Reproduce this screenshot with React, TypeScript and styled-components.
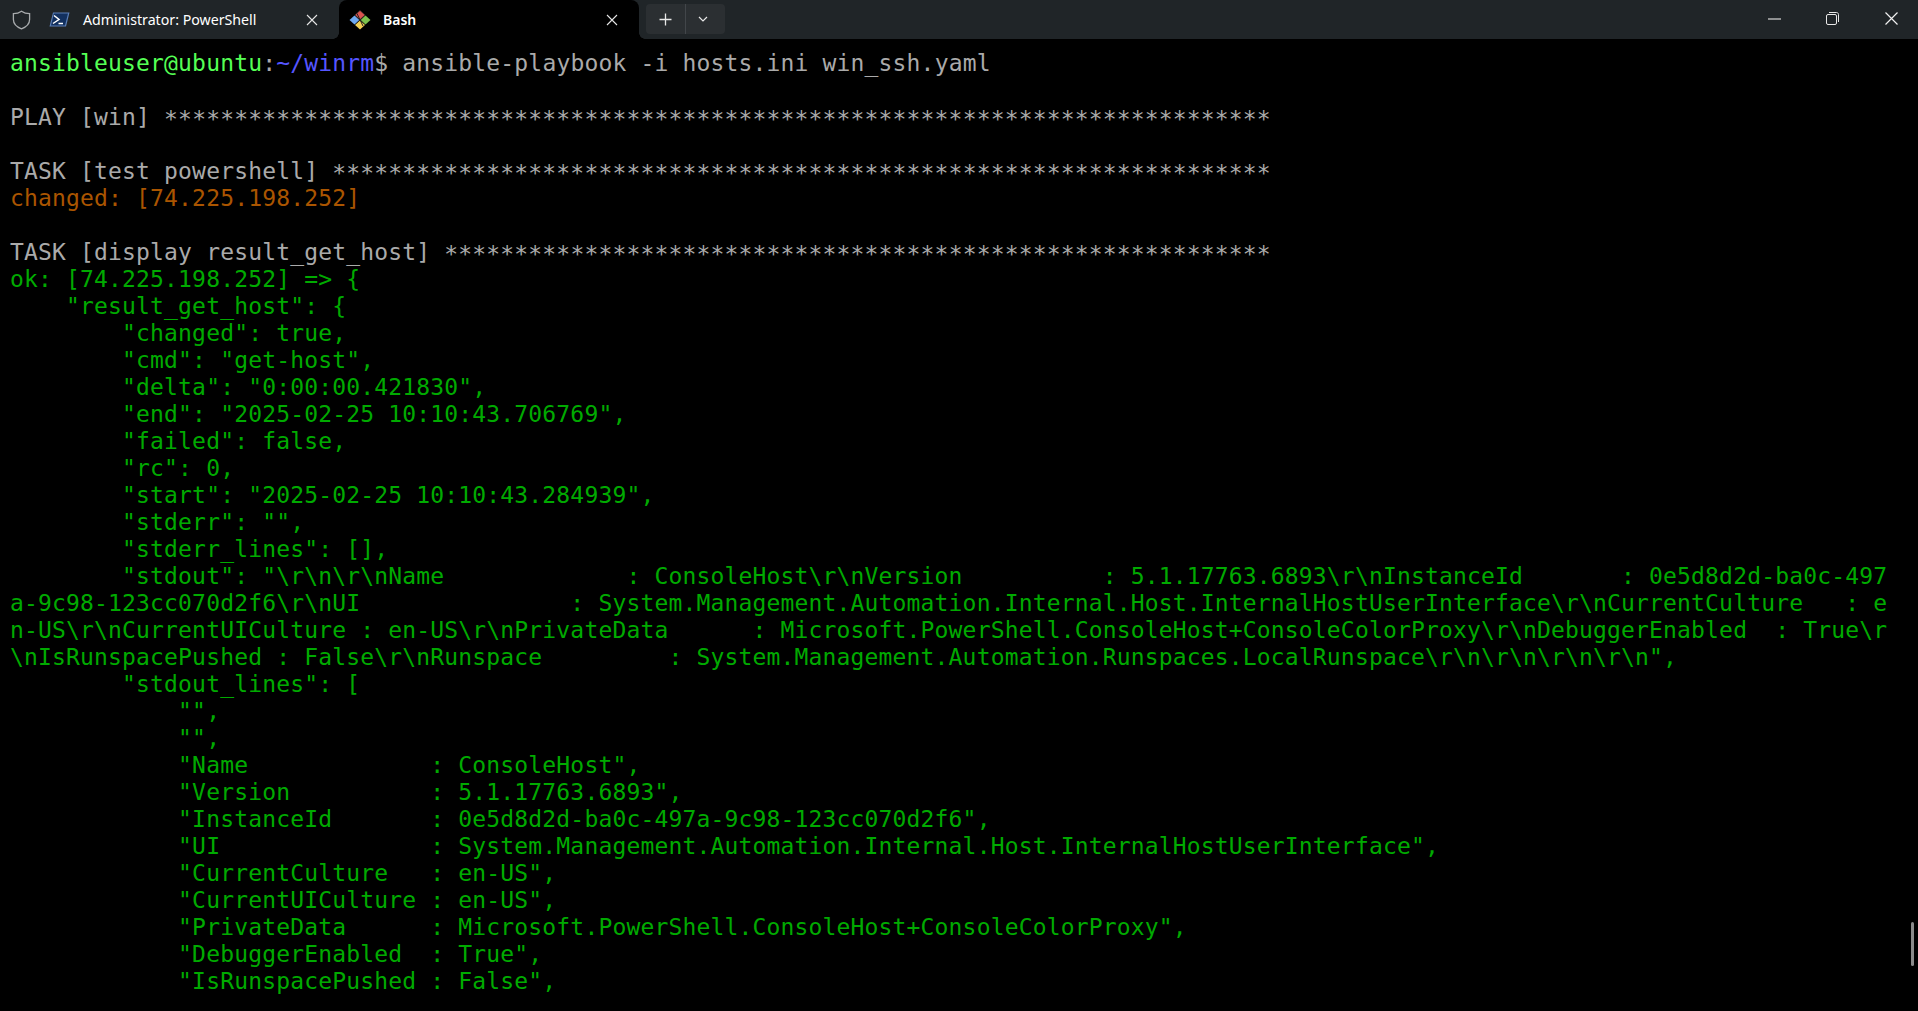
import React from "react";
import styled, { createGlobalStyle } from "styled-components";

const Global = createGlobalStyle`
  html, body { margin: 0; padding: 0; height: 100%; background: #000; overflow: hidden; }
  #root { height: 100%; }
`;

const Window = styled.div`
  position: relative;
  display: flex;
  flex-direction: column;
  height: 100vh;
  background: #000;
  overflow: hidden;
`;

const TitleBar = styled.header`
  display: flex;
  align-items: stretch;
  flex: 0 0 39px;
  background: #202528;
  font-family: "Noto Sans", "Open Sans", sans-serif;
  color: #fff;
`;

const ShieldSlot = styled.div`
  display: flex;
  align-items: center;
  justify-content: center;
  width: 42px;
`;

const Tab = styled.div<{ $width: number }>`
  display: flex;
  align-items: center;
  box-sizing: border-box;
  width: ${(p) => p.$width}px;
  padding: 0 12px 0 7px;
`;

const ActiveTab = styled(Tab)`
  position: relative;
  padding-left: 10px;
  background: #000;
  border-radius: 8px 8px 0 0;

  &::before,
  &::after {
    content: "";
    position: absolute;
    bottom: 0;
    width: 6px;
    height: 6px;
  }
  &::before {
    left: -6px;
    background: radial-gradient(circle at 0 0, transparent 5.5px, #000 6px);
  }
  &::after {
    right: -6px;
    background: radial-gradient(circle at 100% 0, transparent 5.5px, #000 6px);
  }
`;

const TabIcon = styled.span`
  display: flex;
  flex: 0 0 22px;
  margin-right: 12px;
`;

const TabLabel = styled.span<{ $active?: boolean }>`
  flex: 1;
  font-size: ${(p) => (p.$active ? 14 : 14.2)}px;
  font-weight: ${(p) => (p.$active ? 600 : 400)};
  white-space: nowrap;
`;

const CloseGlyph = styled.svg`
  flex: none;
  margin-right: 9px;
`;

const NewTabGroup = styled.div`
  display: flex;
  align-items: center;
  align-self: flex-start;
  height: 30px;
  margin: 4px 0 0 7px;
  background: #2b2f32;
  border-radius: 4px;
`;

const NewTabButton = styled.div<{ $w: number; $divider?: boolean; $endGap?: number }>`
  display: flex;
  align-items: center;
  justify-content: center;
  width: ${(p) => p.$w}px;
  height: 100%;
  box-sizing: border-box;
  padding-right: ${(p) => p.$endGap ?? 0}px;
  border-right: ${(p) => (p.$divider ? "1px solid #42464a" : "0")};
`;

const Spacer = styled.div`
  flex: 1;
`;

const WindowButton = styled.div<{ $w?: number; $startGap?: number }>`
  display: flex;
  align-items: center;
  justify-content: center;
  box-sizing: border-box;
  width: ${(p) => p.$w ?? 58}px;
  height: 37px;
  padding-left: ${(p) => p.$startGap ?? 0}px;
`;

const Terminal = styled.main`
  flex: 1;
  padding: 11px 0 0 10px;
  font-family: "DejaVu Sans Mono", monospace;
  font-size: 23px;
  letter-spacing: 0.162px;
  line-height: 27px;
  color: #aaaaaa;
  overflow: hidden;
`;

const Line = styled.div<{ $tone?: "green" | "orange" }>`
  height: 27px;
  white-space: pre;
  color: ${(p) => (p.$tone === "green" ? "#00aa00" : p.$tone === "orange" ? "#aa5500" : "#aaaaaa")};
`;

const PromptUser = styled.span`
  color: #55ff55;
`;

const PromptPath = styled.span`
  color: #5555ff;
`;

const Stars = styled.span`
  vertical-align: -2px;
`;

const ScrollThumb = styled.div`
  position: absolute;
  right: 4px;
  top: 922px;
  width: 3px;
  height: 44px;
  border-radius: 2px;
  background: #8a8a8a;
`;

const stars = (n: number) => "*".repeat(n);

const greenLines = [
  'ok: [74.225.198.252] => {',
  '    "result_get_host": {',
  '        "changed": true,',
  '        "cmd": "get-host",',
  '        "delta": "0:00:00.421830",',
  '        "end": "2025-02-25 10:10:43.706769",',
  '        "failed": false,',
  '        "rc": 0,',
  '        "start": "2025-02-25 10:10:43.284939",',
  '        "stderr": "",',
  '        "stderr_lines": [],',
  '        "stdout": "\\r\\n\\r\\nName             : ConsoleHost\\r\\nVersion          : 5.1.17763.6893\\r\\nInstanceId       : 0e5d8d2d-ba0c-497',
  'a-9c98-123cc070d2f6\\r\\nUI               : System.Management.Automation.Internal.Host.InternalHostUserInterface\\r\\nCurrentCulture   : e',
  'n-US\\r\\nCurrentUICulture : en-US\\r\\nPrivateData      : Microsoft.PowerShell.ConsoleHost+ConsoleColorProxy\\r\\nDebuggerEnabled  : True\\r',
  '\\nIsRunspacePushed : False\\r\\nRunspace         : System.Management.Automation.Runspaces.LocalRunspace\\r\\n\\r\\n\\r\\n\\r\\n",',
  '        "stdout_lines": [',
  '            "",',
  '            "",',
  '            "Name             : ConsoleHost",',
  '            "Version          : 5.1.17763.6893",',
  '            "InstanceId       : 0e5d8d2d-ba0c-497a-9c98-123cc070d2f6",',
  '            "UI               : System.Management.Automation.Internal.Host.InternalHostUserInterface",',
  '            "CurrentCulture   : en-US",',
  '            "CurrentUICulture : en-US",',
  '            "PrivateData      : Microsoft.PowerShell.ConsoleHost+ConsoleColorProxy",',
  '            "DebuggerEnabled  : True",',
  '            "IsRunspacePushed : False",',
];

const Close = ({ size = 12, color = "#e6e6e6" }: { size?: number; color?: string }) => (
  <CloseGlyph width={size} height={size} viewBox="0 0 12 12" fill="none" stroke={color} strokeWidth="1.1">
    <path d="M1 1 L11 11 M11 1 L1 11" />
  </CloseGlyph>
);

export default function App() {
  return (
    <Window>
      <Global />
      <TitleBar>
        <ShieldSlot>
          <svg width="19" height="20" viewBox="0 0 19 20" fill="none" stroke="#a8abad" strokeWidth="1.3">
            <path d="M9.5 1.2 C12 3 14.6 3.6 17.6 3.6 V9.5 C17.6 14 14.2 17 9.5 18.8 C4.8 17 1.4 14 1.4 9.5 V3.6 C4.4 3.6 7 3 9.5 1.2 Z" />
          </svg>
        </ShieldSlot>
        <Tab $width={297}>
          <TabIcon>
            <svg width="21" height="15" viewBox="0 0 21 15">
              <path d="M4 0.5 H20.5 L17 14.5 H0.5 Z" fill="#5b7fb8" />
              <path d="M4.8 1.5 H19 L16 13.5 H2 Z" fill="#12305f" />
              <path d="M5 3.5 L10 7.5 L4 11.5" fill="none" stroke="#fff" strokeWidth="1.5" />
              <path d="M9.5 11.5 H14" stroke="#fff" strokeWidth="1.5" />
            </svg>
          </TabIcon>
          <TabLabel>Administrator: PowerShell</TabLabel>
          <Close />
        </Tab>
        <ActiveTab $width={300}>
          <TabIcon>
            <svg width="22" height="20" viewBox="0 0 22 20">
              <path d="M11 0.5 L16 5 L11 9.5 L6 5 Z" fill="#d9534f" />
              <path d="M11 0.5 L16 5 L11 9.5 L6 5 Z" fill="none" stroke="#333" strokeWidth="0.6" />
              <path d="M5.5 5.5 L10.3 10 L5.5 14.5 L0.5 10 Z" fill="#6ea8f0" />
              <path d="M16.5 5.5 L21.5 10 L16.5 14.5 L11.7 10 Z" fill="#7cc24e" />
              <path d="M11 10.5 L16 15 L11 19.5 L6 15 Z" fill="#f2cf55" />
              <path d="M8 3.5 L14 16" stroke="#222" strokeWidth="1" />
            </svg>
          </TabIcon>
          <TabLabel $active>Bash</TabLabel>
          <Close />
        </ActiveTab>
        <NewTabGroup>
          <NewTabButton $w={40} $divider>
            <svg width="13" height="13" viewBox="0 0 13 13" stroke="#e8e8e8" strokeWidth="1.3">
              <path d="M6.5 0.5 V12.5 M0.5 6.5 H12.5" />
            </svg>
          </NewTabButton>
          <NewTabButton $w={39} $endGap={6}>
            <svg width="10" height="6" viewBox="0 0 10 6" fill="none" stroke="#e8e8e8" strokeWidth="1.2">
              <path d="M1 1 L5 5 L9 1" />
            </svg>
          </NewTabButton>
        </NewTabGroup>
        <Spacer />
        <WindowButton>
          <svg width="13" height="2" viewBox="0 0 13 2"><rect width="13" height="1.2" y="0.4" fill="#d8d8d8" /></svg>
        </WindowButton>
        <WindowButton>
          <svg width="13" height="13" viewBox="0 0 13 13" fill="none" stroke="#e8e8e8" strokeWidth="1">
            <rect x="0.5" y="2.5" width="10" height="10" rx="1.5" />
            <path d="M3 0.5 H10.5 C11.6 0.5 12.5 1.4 12.5 2.5 V10" />
          </svg>
        </WindowButton>
        <WindowButton $w={57} $startGap={4}>
          <svg width="13" height="13" viewBox="0 0 13 13" fill="none" stroke="#f0f0f0" strokeWidth="1.2">
            <path d="M0.5 0.5 L12.5 12.5 M12.5 0.5 L0.5 12.5" />
          </svg>
        </WindowButton>
      </TitleBar>
      <Terminal>
        <Line>
          <PromptUser>ansibleuser@ubuntu</PromptUser>:<PromptPath>~/winrm</PromptPath>$ ansible-playbook -i hosts.ini win_ssh.yaml
        </Line>
        <Line> </Line>
        <Line>PLAY [win] <Stars>{stars(79)}</Stars></Line>
        <Line> </Line>
        <Line>TASK [test powershell] <Stars>{stars(67)}</Stars></Line>
        <Line $tone="orange">changed: [74.225.198.252]</Line>
        <Line> </Line>
        <Line>TASK [display result_get_host] <Stars>{stars(59)}</Stars></Line>
        {greenLines.map((text, i) => (
          <Line key={i} $tone="green">{text}</Line>
        ))}
      </Terminal>
      <ScrollThumb />
    </Window>
  );
}
